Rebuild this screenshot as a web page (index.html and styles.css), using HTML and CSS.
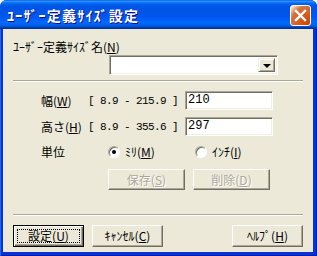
FILE: index.html
```html
<!DOCTYPE html>
<html>
<head>
  <title>ﾕｰｻﾞｰ定義ｻｲｽﾞ設定</title>
  <link rel="stylesheet" href="styles.css">
</head>
<body>

<div class="window">
  <div class="titlebar">
    <span class="title">ﾕｰｻﾞｰ定義ｻｲｽﾞ設定</span>
    <div class="close">
      <svg width="21" height="21" viewBox="0 0 21 21">
        <path d="M6 6 L15 15 M15 6 L6 15" stroke="#fff" stroke-width="2.4" stroke-linecap="square"/>
      </svg>
    </div>
  </div>

  <div class="client">
    <div class="name-label">ﾕｰｻﾞｰ定義ｻｲｽﾞ名(<u>N</u>)</div>
    <div class="combo">
      <div class="combo-text"></div>
      <div class="combo-btn"><span class="arrow"></span></div>
    </div>

    <div class="sep"></div>

    <div class="rows">
      <div class="row">
        <span class="lbl">幅(<u>W</u>)</span>
        <span class="range">[ 8.9 - 215.9 ]</span>
        <div class="field">210</div>
      </div>
      <div class="row row2">
        <span class="lbl">高さ(<u>H</u>)</span>
        <span class="range">[ 8.9 - 355.6 ]</span>
        <div class="field">297</div>
      </div>
      <div class="row row3">
        <span class="lbl unit">単位</span>
        <label class="radio-opt">
          <span class="radio checked"></span>
          <span>ﾐﾘ(<u>M</u>)</span>
        </label>
        <label class="radio-opt">
          <span class="radio"></span>
          <span>ｲﾝﾁ(<u>I</u>)</span>
        </label>
      </div>
      <div class="btn-row">
        <div class="btn wide disabled">保存(<u>S</u>)</div>
        <div class="btn wide disabled">削除(<u>D</u>)</div>
      </div>
    </div>

    <div class="sep sep2"></div>

    <div class="footer">
      <div class="btn default"><span class="focus">設定(<u>U</u>)</span></div>
      <div class="btn">ｷｬﾝｾﾙ(<u>C</u>)</div>
      <div class="btn help">ﾍﾙﾌﾟ(<u>H</u>)</div>
    </div>
  </div>
</div>

</body>
</html>
```

FILE: styles.css
```css
* {
  box-sizing: border-box;
}

body {
  margin: 0;
  background: #fff;
  font-family: "Noto Sans CJK JP", sans-serif;
  font-size: 12px;
  color: #000;
}

.window {
  width: 317px;
  height: 256px;
  display: flex;
  flex-direction: column;
  background: #0831d9;
  border-radius: 7px 7px 0 0;
  padding: 0 4px 4px 3px;
  box-shadow: inset 1px 0 #166aee, inset -1px 0 #001ea0, inset 0 -1px #001ea0;
}

.titlebar {
  height: 29px;
  margin: 0 -4px 0 -3px;
  display: flex;
  align-items: flex-start;
  border-radius: 7px 7px 0 0;
  background: linear-gradient(to bottom, #0058ee 0%, #3593ff 4%, #288eff 6%, #127dff 8%, #036ffc 10%, #0262ee 14%, #0057e5 20%, #0054e3 24%, #0055eb 56%, #005bf5 66%, #026afe 76%, #0062ef 86%, #0052d6 92%, #0040ab 94%, #003092 100%);
}

.title {
  margin: 7px 0 0 7px;
  color: #fff;
  font-size: 14px;
  font-weight: bold;
  line-height: 16px;
  letter-spacing: 1.2px;
  text-shadow: 1px 1px #0f1089;
}

.close {
  margin: 5px 6px 0 auto;
  width: 21px;
  height: 21px;
  border: 1px solid #fff;
  border-radius: 3px;
  background: radial-gradient(circle at 90% 90%, #cc4600 0%, #dc6527 55%, #cd7546 70%, #ffccb2 90%, #fff 100%);
  overflow: hidden;
}

.close svg {
  display: block;
  margin: -1px;
}

.client {
  flex: 1;
  background: #ece9d8;
  padding: 11px 10px 0 10px;
}

.name-label {
  line-height: 14px;
  height: 15px;
}

.combo {
  margin: 0 25px 0 96px;
  height: 20px;
  display: flex;
  background: #fff;
  border: 1px solid;
  border-color: #aca899 #fff #fff #aca899;
  box-shadow: inset 1px 1px #716f64, inset -1px -1px #f1efe2;
  padding: 2px;
}

.combo-text {
  flex: 1;
}

.combo-btn {
  width: 17px;
  height: 14px;
  background: #ece9d8;
  border: 1px solid;
  border-color: #f1efe2 #716f64 #716f64 #f1efe2;
  box-shadow: inset 1px 1px #fff, inset -1px -1px #aca899;
  display: flex;
  align-items: center;
  justify-content: center;
}

.arrow {
  width: 0;
  height: 0;
  border-left: 4px solid transparent;
  border-right: 4px solid transparent;
  border-top: 4px solid #000;
  margin-top: 1px;
}

.sep {
  margin-top: 5px;
  height: 2px;
  border-top: 1px solid #aca899;
  border-bottom: 1px solid #fff;
}

.rows {
  padding-left: 28px;
}

.row {
  display: flex;
  align-items: center;
  height: 19px;
  margin-top: 9px;
}

.row2 {
  margin-top: 7px;
}

.row3 {
  margin-top: 8px;
  height: 15px;
}

.lbl {
  width: 47px;
  line-height: 14px;
}

.unit {
  width: 67px;
}

.range {
  width: 97px;
  white-space: pre;
  font-family: "Liberation Mono", monospace;
  font-size: 11px;
  letter-spacing: -0.6px;
}

.field {
  width: 88px;
  height: 19px;
  background: #fff;
  border: 1px solid;
  border-color: #aca899 #fff #fff #aca899;
  box-shadow: inset 1px 1px #716f64, inset -1px -1px #f1efe2;
  padding: 1px 2px;
  line-height: 15px;
  font-family: "Liberation Mono", monospace;
}

.radio-opt {
  width: 87px;
  display: flex;
  align-items: center;
  gap: 5px;
}

.radio {
  width: 12px;
  height: 12px;
  border-radius: 50%;
  border: 1px solid;
  border-color: #aca899 #fff #fff #aca899;
  background: #fff;
  box-shadow: inset 1px 1px #716f64;
  display: flex;
  align-items: center;
  justify-content: center;
}

.radio.checked::after {
  content: "";
  width: 4px;
  height: 4px;
  border-radius: 50%;
  background: #000;
}

.btn-row {
  display: flex;
  gap: 8px;
  margin-top: 10px;
  padding-left: 67px;
}

.btn {
  width: 71px;
  height: 22px;
  display: flex;
  align-items: center;
  justify-content: center;
  background: #ece9d8;
  border: 1px solid;
  border-color: #fff #716f64 #716f64 #fff;
  box-shadow: inset -1px -1px #aca899;
  line-height: 14px;
}

.btn.wide {
  width: 77px;
  height: 21px;
}

.btn.disabled {
  color: #aca899;
  text-shadow: 1px 1px #fff;
}

.sep2 {
  margin-top: 24px;
}

.footer {
  display: flex;
  gap: 8px;
  margin-top: 9px;
}

.btn.default {
  border: 1px solid #000;
  box-shadow: inset 1px 1px #fff, inset -1px -1px #716f64, inset -2px -2px #aca899;
  padding: 3px;
}

.focus {
  flex: 1;
  align-self: stretch;
  display: flex;
  align-items: center;
  justify-content: center;
  border: 1px dotted #000;
}

.help {
  margin-left: auto;
}
```
